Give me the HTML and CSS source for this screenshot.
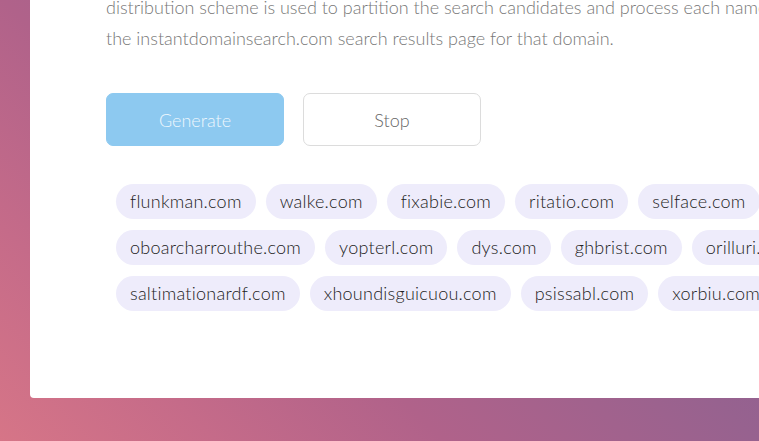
FILE: index.html
```html
<!DOCTYPE html>
<html>
<head>
<meta charset="utf-8">
<link rel="stylesheet" href="styles.css">
</head>
<body>
<div class="page">
  <main class="card">
    <p class="intro">
      <span class="line">distribution scheme is used to partition the search candidates and process each name on a separate worker, and clicking</span>
      <span class="line">the instantdomainsearch.com search results page for that domain.</span>
    </p>
    <div class="actions">
      <button class="btn btn-primary">Generate</button>
      <button class="btn btn-secondary">Stop</button>
    </div>
    <div class="results">
      <div class="row">
        <span class="chip">flunkman.com</span>
        <span class="chip">walke.com</span>
        <span class="chip">fixabie.com</span>
        <span class="chip">ritatio.com</span>
        <span class="chip">selface.com</span>
      </div>
      <div class="row">
        <span class="chip">oboarcharrouthe.com</span>
        <span class="chip">yopterl.com</span>
        <span class="chip">dys.com</span>
        <span class="chip">ghbrist.com</span>
        <span class="chip">orilluri.com</span>
      </div>
      <div class="row">
        <span class="chip">saltimationardf.com</span>
        <span class="chip">xhoundisguicuou.com</span>
        <span class="chip">psissabl.com</span>
        <span class="chip">xorbiu.com</span>
      </div>
    </div>
  </main>
</div>
</body>
</html>
```
FILE: styles.css
```css
html, body {
  margin: 0;
  padding: 0;
  width: 759px;
  height: 441px;
  overflow: hidden;
}
body {
  background: linear-gradient(45deg, #d67587 0%, #c56b89 18%, #b0628a 37%, #97628f 63%, #7e5c94 100%);
  font-family: "Lato", "Liberation Sans", sans-serif;
}
.page {
  padding-left: 30px;
  margin-top: -38px;
}
.card {
  background: #fff;
  width: 900px;
  height: 436px;
  border-radius: 4px;
  box-sizing: border-box;
  padding: 30px 0 0 76px;
}
.intro {
  margin: 0;
  font-size: 18px;
  line-height: 31px;
  font-weight: 300;
  color: #777;
}
.line {
  display: block;
  white-space: nowrap;
}
.actions {
  display: flex;
  gap: 19px;
  margin-top: 39px;
}
.btn {
  width: 178px;
  height: 53px;
  border-radius: 7px;
  font-family: inherit;
  font-size: 18px;
  font-weight: 300;
  cursor: pointer;
}
.btn-primary {
  background: #8dc9f0;
  border: 1px solid #8dc9f0;
  color: #eef7fd;
}
.btn-secondary {
  background: #fff;
  border: 1px solid #dcdcdc;
  color: #666;
}
.results {
  display: flex;
  flex-direction: column;
  gap: 11px;
  margin-top: 38px;
  padding-left: 10px;
}
.row {
  display: flex;
  gap: 10px;
  white-space: nowrap;
}
.chip {
  background: #eeecfb;
  color: #222;
  border-radius: 18px;
  height: 35px;
  line-height: 35px;
  padding: 0 14px;
  font-size: 18px;
  font-weight: 300;
  letter-spacing: 0.25px;
  font-variant-ligatures: none;
}
```
